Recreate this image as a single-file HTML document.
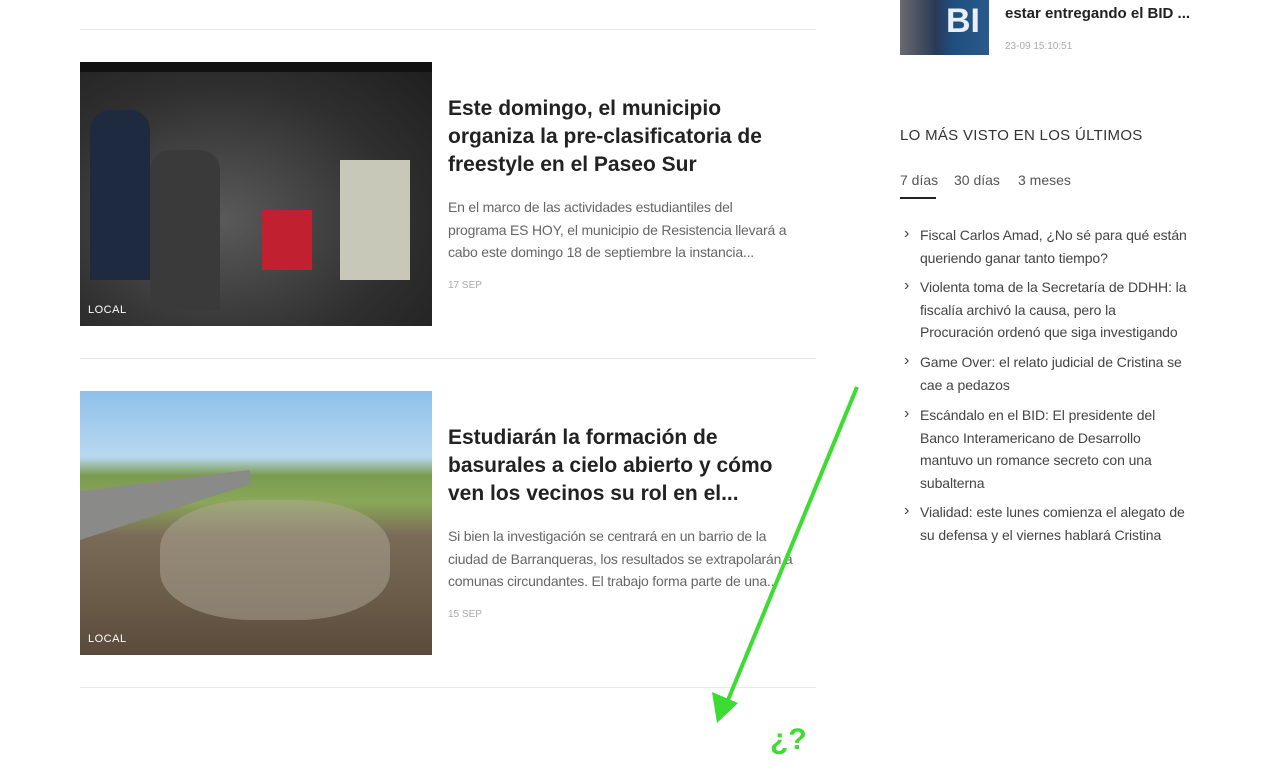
<!DOCTYPE html>
<html><head><meta charset="utf-8"><style>
*{margin:0;padding:0;box-sizing:border-box}
body{width:1280px;height:784px;background:#fff;font-family:"Liberation Sans",sans-serif;position:relative;overflow:hidden;color:#222}
.a{position:absolute}
.hr{position:absolute;left:80px;width:736px;height:1px;background:#e8e8e8}
h2{position:absolute;left:448px;width:360px;font-size:21px;line-height:28px;font-weight:bold;color:#222}
.ex{position:absolute;left:448px;width:380px;font-size:14px;line-height:22.5px;color:#666;letter-spacing:-0.2px;white-space:nowrap}
.dt{position:absolute;left:448px;font-size:10px;color:#aaa}
.tag{position:absolute;left:88px;font-size:11px;color:#fff;letter-spacing:.5px}
.li{position:absolute;left:904px;width:320px;font-size:14px;line-height:22.5px;color:#444;padding-left:16px;letter-spacing:-0.1px;white-space:nowrap}
.li:before{content:"›";position:absolute;left:0;top:-1px;font-size:16px;color:#444}
</style></head><body>
<div class="hr" style="top:29px"></div>
<div class="a" style="left:80px;top:62px;width:352px;height:264px;background:radial-gradient(ellipse at 40% 60%,#5a5a5a,#2f2f2f 60%,#1e1e1e)"></div>
<div class="a" style="left:80px;top:62px;width:352px;height:10px;background:#111"></div>
<div class="a" style="left:90px;top:110px;width:60px;height:170px;background:#1e2a40;border-radius:20px 20px 0 0"></div>
<div class="a" style="left:150px;top:150px;width:70px;height:160px;background:#3a3a3a;border-radius:20px 20px 0 0"></div>
<div class="a" style="left:262px;top:210px;width:50px;height:60px;background:#c02030"></div>
<div class="a" style="left:340px;top:160px;width:70px;height:120px;background:#c8c8b8"></div>
<div class="tag" style="top:304px">LOCAL</div>
<h2 style="top:95px">Este domingo, el municipio organiza la pre-clasificatoria de freestyle en el Paseo Sur</h2>
<div class="ex" style="top:196px">En el marco de las actividades estudiantiles del<br>programa ES HOY, el municipio de Resistencia llevará a<br>cabo este domingo 18 de septiembre la instancia...</div>
<div class="dt" style="top:280px">17 SEP</div>
<div class="hr" style="top:358px"></div>
<div class="a" style="left:80px;top:391px;width:352px;height:264px;background:linear-gradient(180deg,#8fc0ea 0%,#b8d8f0 25%,#7a9a50 32%,#8aa858 42%,#7a6a58 55%,#6a5a48 80%,#5a4a3a 100%)"></div>
<div class="a" style="left:80px;top:470px;width:170px;height:70px;background:#8a8a88;clip-path:polygon(0 30%,100% 0,100% 20%,0 100%)"></div>
<div class="a" style="left:160px;top:500px;width:230px;height:120px;background:#b0a898;opacity:.5;border-radius:40%"></div>
<div class="tag" style="top:633px">LOCAL</div>
<h2 style="top:424px">Estudiarán la formación de basurales a cielo abierto y cómo ven los vecinos su rol en el...</h2>
<div class="ex" style="top:525px">Si bien la investigación se centrará en un barrio de la<br>ciudad de Barranqueras, los resultados se extrapolarán a<br>comunas circundantes. El trabajo forma parte de una...</div>
<div class="dt" style="top:609px">15 SEP</div>
<div class="hr" style="top:687px"></div>

<div class="a" style="left:900px;top:0;width:89px;height:55px;background:linear-gradient(90deg,#6a6a70 0%,#2a3a55 40%,#1f4e80 60%,#2a5a8a 100%)"></div>
<div class="a" style="left:946px;top:2px;font-size:34px;font-weight:bold;color:#e8eef5">BI</div>
<div class="a" style="left:1005px;top:5px;font-size:15px;font-weight:bold;color:#222">estar entregando el BID ...</div>
<div class="a" style="left:1005px;top:41px;font-size:10px;color:#aaa">23-09 15:10:51</div>
<div class="a" style="left:900px;top:127px;font-size:15px;color:#333;letter-spacing:.3px">LO MÁS VISTO EN LOS ÚLTIMOS</div>
<div class="a" style="left:900px;top:172px;font-size:14px;color:#555">7 días</div>
<div class="a" style="left:954px;top:172px;font-size:14px;color:#555">30 días</div>
<div class="a" style="left:1018px;top:172px;font-size:14px;color:#555">3 meses</div>
<div class="a" style="left:900px;top:197px;width:36px;height:2px;background:#222"></div>
<div class="li" style="top:224px">Fiscal Carlos Amad, ¿No sé para qué están<br>queriendo ganar tanto tiempo?</div>
<div class="li" style="top:276px">Violenta toma de la Secretaría de DDHH: la<br>fiscalía archivó la causa, pero la<br>Procuración ordenó que siga investigando</div>
<div class="li" style="top:351px">Game Over: el relato judicial de Cristina se<br>cae a pedazos</div>
<div class="li" style="top:404px">Escándalo en el BID: El presidente del<br>Banco Interamericano de Desarrollo<br>mantuvo un romance secreto con una<br>subalterna</div>
<div class="li" style="top:501px">Vialidad: este lunes comienza el alegato de<br>su defensa y el viernes hablará Cristina</div>

<svg class="a" style="left:0;top:0" width="1280" height="784">
<line x1="857" y1="387" x2="728" y2="700" stroke="#3cdc32" stroke-width="4"/>
<polygon points="717,723 712,692 738,703" fill="#3cdc32"/>
<text x="770" y="749" font-family="Liberation Sans" font-weight="bold" font-size="30" fill="#3cdc32">¿?</text>
</svg>
</body></html>
